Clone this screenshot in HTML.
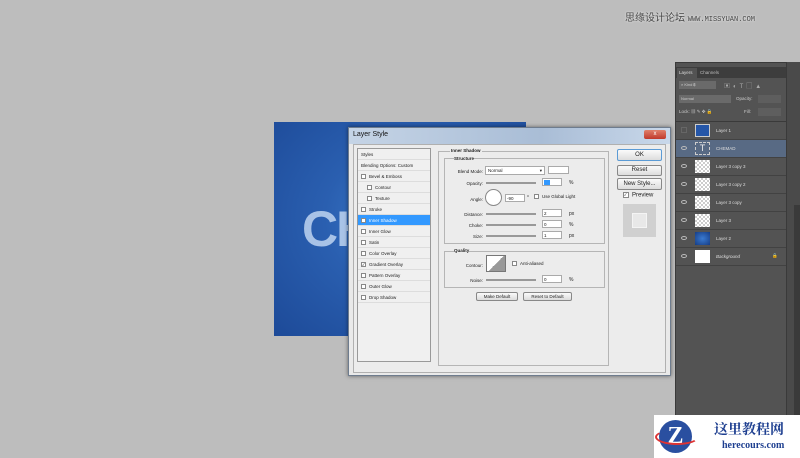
<!DOCTYPE html>
<html><head><meta charset="utf-8"><style>
*{box-sizing:border-box;margin:0;padding:0}
body{width:800px;height:458px;background:#bdbdbd;position:relative;overflow:hidden;font-family:"Liberation Sans","Noto Sans CJK SC",sans-serif;font-size:5px;color:#222}
.a{position:absolute}
.canvas{left:274px;top:122px;width:252px;height:214px;background:radial-gradient(ellipse at 55% 45%,#3f7fd0 0%,#2a5fb0 45%,#1d4a98 100%)}
.dlg{left:348px;top:127px;width:323px;height:249px;background:#e9e9e9;border:1px solid #6e7c8e;box-shadow:0 0 4px rgba(0,0,0,.5)}
.title{left:0;top:0;width:321px;height:16px;background:linear-gradient(90deg,#c5d4e6,#a9bdd6 60%,#c9d8ea);font-size:7px;padding:3px 4px;color:#111}
.close{left:295px;top:2px;width:22px;height:9px;background:linear-gradient(#e0806a,#c0392b);border-radius:2px;color:#fff;font-size:6px;text-align:center;line-height:9px}
.inner{left:4px;top:16px;width:313px;height:229px;background:#ececec;border:1px solid #b0b0b0}
.list{left:8px;top:20px;width:74px;height:214px;background:#f0f0f0;border:1px solid #999}
.list div{height:11px;border-bottom:1px solid #ddd;line-height:11px;padding-left:3px;font-size:4.5px;white-space:nowrap}
.cb{display:inline-block;width:5px;height:5px;border:1px solid #888;background:#fff;vertical-align:middle;margin-right:3px;font-size:4px;line-height:3px}
.grp{border:1px solid #b5b5b5}
.btn{border:1px solid #888;background:linear-gradient(#fafafa,#dcdcdc);border-radius:2px;text-align:center;font-size:6px}
.inp{background:#fff;border:1px solid #aaa}
.sl{height:2px;background:#999}
.lbl{font-size:4.5px;text-align:right}
.panel{left:675px;top:62px;width:112px;height:396px;background:#535353;border:1px solid #3a3a3a}
.row{left:0;width:110px;height:18px;border-bottom:1px solid #424242;color:#ddd;font-size:4.5px}
.row .th{position:absolute;left:19px;top:2px;width:15px;height:13px;background-color:#fff}
.row .nm{position:absolute;left:40px;top:6px}
.row .eye{position:absolute;left:5px;top:6px;width:6px;height:4px;border:1px solid #bbb;border-radius:50%}
.row .chk{background-color:#fff;background-image:linear-gradient(45deg,#ccc 25%,transparent 25%,transparent 75%,#ccc 75%),linear-gradient(45deg,#ccc 25%,transparent 25%,transparent 75%,#ccc 75%);background-size:4px 4px;background-position:0 0,2px 2px}
</style></head><body>
<div class="a" style="left:625px;top:9px;font-size:10px;color:#444;text-shadow:0 0 2px #fff">思缘设计论坛 <span style="font-size:7px;font-family:'Liberation Mono',monospace">WWW.MISSYUAN.COM</span></div>

<div class="a canvas">
<div class="a" style="left:28px;top:78px;font:bold 50px 'Liberation Sans',sans-serif;color:rgba(200,220,245,.8);letter-spacing:-2px">CH</div>
</div>

<div class="a dlg">
<div class="a title">Layer Style</div>
<div class="a close">x</div>
<div class="a inner"></div>
<div class="a list">
<div>Styles</div>
<div>Blending Options: Custom</div>
<div><span class="cb"></span>Bevel &amp; Emboss</div>
<div style="padding-left:9px"><span class="cb"></span>Contour</div>
<div style="padding-left:9px"><span class="cb"></span>Texture</div>
<div><span class="cb"></span>Stroke</div>
<div style="background:#3399ff;color:#fff"><span class="cb">✓</span>Inner Shadow</div>
<div><span class="cb"></span>Inner Glow</div>
<div><span class="cb"></span>Satin</div>
<div><span class="cb"></span>Color Overlay</div>
<div><span class="cb">✓</span>Gradient Overlay</div>
<div><span class="cb"></span>Pattern Overlay</div>
<div><span class="cb"></span>Outer Glow</div>
<div><span class="cb"></span>Drop Shadow</div>
</div>
<div class="a grp" style="left:89px;top:23px;width:171px;height:215px"></div>
<div class="a" style="left:101px;top:20px;font-size:4.5px;font-weight:bold;background:#ececec;padding:0 1px">Inner Shadow</div>
<div class="a grp" style="left:95px;top:30px;width:161px;height:86px"></div>
<div class="a" style="left:105px;top:28px;font-size:4.5px;font-weight:bold;background:#ececec">Structure</div>
<div class="a lbl" style="left:100px;top:41px;width:34px">Blend Mode:</div>
<div class="a inp" style="left:136px;top:38px;width:60px;height:9px;font-size:4.5px;padding:1px 2px">Normal<span style="float:right">▾</span></div>
<div class="a inp" style="left:199px;top:38px;width:21px;height:8px"></div>
<div class="a lbl" style="left:100px;top:53px;width:34px">Opacity:</div>
<div class="a sl" style="left:137px;top:54px;width:50px"></div>
<div class="a inp" style="left:193px;top:50px;width:20px;height:8px"><div style="width:6px;height:5px;background:#3399ff;margin:1px"></div></div>
<div class="a" style="left:220px;top:52px">%</div>
<div class="a lbl" style="left:100px;top:69px;width:34px">Angle:</div>
<div class="a" style="left:136px;top:61px;width:17px;height:17px;border:1px solid #888;border-radius:50%;background:#fff"></div>
<div class="a inp" style="left:156px;top:66px;width:20px;height:8px;font-size:4.5px;padding:1px">-90</div>
<div class="a" style="left:178px;top:67px">°</div>
<div class="a" style="left:185px;top:66px;font-size:4.5px"><span class="cb"></span>Use Global Light</div>
<div class="a lbl" style="left:100px;top:84px;width:34px">Distance:</div>
<div class="a sl" style="left:137px;top:85px;width:50px"></div>
<div class="a inp" style="left:193px;top:81px;width:20px;height:8px;font-size:4.5px;padding:1px">2</div>
<div class="a" style="left:220px;top:83px">px</div>
<div class="a lbl" style="left:100px;top:95px;width:34px">Choke:</div>
<div class="a sl" style="left:137px;top:96px;width:50px"></div>
<div class="a inp" style="left:193px;top:92px;width:20px;height:8px;font-size:4.5px;padding:1px">0</div>
<div class="a" style="left:220px;top:94px">%</div>
<div class="a lbl" style="left:100px;top:106px;width:34px">Size:</div>
<div class="a sl" style="left:137px;top:107px;width:50px"></div>
<div class="a inp" style="left:193px;top:103px;width:20px;height:8px;font-size:4.5px;padding:1px">1</div>
<div class="a" style="left:220px;top:105px">px</div>
<div class="a grp" style="left:95px;top:123px;width:161px;height:37px"></div>
<div class="a" style="left:105px;top:120px;font-size:4.5px;font-weight:bold;background:#ececec">Quality</div>
<div class="a lbl" style="left:100px;top:135px;width:34px">Contour:</div>
<div class="a" style="left:137px;top:127px;width:20px;height:17px;border:1px solid #777;background:linear-gradient(135deg,#fff 50%,#999 50%)"></div>
<div class="a" style="left:163px;top:133px;font-size:4.5px"><span class="cb"></span>Anti-aliased</div>
<div class="a lbl" style="left:100px;top:150px;width:34px">Noise:</div>
<div class="a sl" style="left:137px;top:151px;width:50px"></div>
<div class="a inp" style="left:193px;top:147px;width:20px;height:8px;font-size:4.5px;padding:1px">0</div>
<div class="a" style="left:220px;top:149px">%</div>
<div class="a btn" style="left:127px;top:164px;width:42px;height:9px;font-size:4.5px;line-height:8px">Make Default</div>
<div class="a btn" style="left:174px;top:164px;width:49px;height:9px;font-size:4.5px;line-height:8px">Reset to Default</div>
<div class="a btn" style="left:268px;top:21px;width:45px;height:12px;line-height:10px;border-color:#5b9bd5">OK</div>
<div class="a btn" style="left:268px;top:37px;width:45px;height:11px;line-height:9px">Reset</div>
<div class="a btn" style="left:268px;top:50px;width:45px;height:12px;line-height:10px">New Style...</div>
<div class="a" style="left:274px;top:64px;font-size:6px"><span class="cb" style="width:6px;height:6px">✓</span>Preview</div>
<div class="a" style="left:274px;top:76px;width:33px;height:33px;background:#d0d0d0"><div style="margin:9px;width:15px;height:15px;background:#e8e8e8;border:1px solid #f4f4f4"></div></div>
</div>

<div class="a panel">
<div class="a" style="left:0;top:4px;width:110px;height:11px;background:#3d3d3d"></div>
<div class="a" style="left:1px;top:5px;width:20px;height:10px;background:#535353;color:#ddd;font-size:4.5px;padding:2px 2px">Layers</div>
<div class="a" style="left:24px;top:7px;color:#bbb;font-size:4.5px">Channels</div>
<div class="a" style="left:3px;top:18px;width:37px;height:8px;background:#6a6a6a;color:#ccc;font-size:4px;padding:1px 2px">⌕ Kind ⇕</div>
<div class="a" style="left:48px;top:18px;color:#aaa;font-size:6px;letter-spacing:3px">▣◐T▢▲</div>
<div class="a" style="left:3px;top:32px;width:52px;height:8px;background:#6a6a6a;color:#ccc;font-size:4px;padding:1px 2px">Normal</div>
<div class="a" style="left:60px;top:33px;color:#ccc;font-size:4.5px">Opacity:</div>
<div class="a" style="left:82px;top:32px;width:23px;height:8px;background:#5e5e5e"></div>
<div class="a" style="left:3px;top:46px;color:#ccc;font-size:4.5px">Lock: ▦ ✎ ✥ 🔒</div>
<div class="a" style="left:68px;top:46px;color:#ccc;font-size:4.5px">Fill:</div>
<div class="a" style="left:82px;top:45px;width:23px;height:8px;background:#5e5e5e"></div>
<div class="a" style="left:0;top:58px;width:110px;height:1px;background:#3a3a3a"></div>
<div class="a row" style="top:59px"><span class="th" style="background:#2556a8;border:1px solid #ccc"></span><span class="nm">Layer 1</span><span style="position:absolute;left:5px;top:5px;width:6px;height:6px;border:1px solid #666"></span></div>
<div class="a row" style="top:77px;background:#586a84"><span class="eye"></span><span class="th" style="background:#586a84;border:1px dashed #ccc;color:#eee;font-size:9px;text-align:center">T</span><span class="nm">CHEMAD</span></div>
<div class="a row" style="top:95px"><span class="eye"></span><span class="th chk"></span><span class="nm">Layer 3 copy 3</span></div>
<div class="a row" style="top:113px"><span class="eye"></span><span class="th chk"></span><span class="nm">Layer 3 copy 2</span></div>
<div class="a row" style="top:131px"><span class="eye"></span><span class="th chk"></span><span class="nm">Layer 3 copy</span></div>
<div class="a row" style="top:149px"><span class="eye"></span><span class="th chk"></span><span class="nm">Layer 3</span></div>
<div class="a row" style="top:167px"><span class="eye"></span><span class="th" style="background:radial-gradient(#3a7ad0,#163d85)"></span><span class="nm">Layer 2</span></div>
<div class="a row" style="top:185px"><span class="eye"></span><span class="th"></span><span class="nm" style="font-style:italic">Background</span><span style="position:absolute;left:96px;top:5px;color:#bbb">🔒</span></div>
</div>
<div class="a" style="left:787px;top:62px;width:13px;height:396px;background:#4a4a4a"></div>
<div class="a" style="left:794px;top:205px;width:6px;height:253px;background:#3a3a3a"></div>

<div class="a" style="left:654px;top:415px;width:146px;height:43px;background:#fff">
<div class="a" style="left:5px;top:5px;width:33px;height:33px;border-radius:50%;background:#2a4fa0;color:#fff;font:bold 24px 'Liberation Serif',serif;text-align:center;line-height:33px">Z</div>
<div class="a" style="left:1px;top:14px;width:44px;height:16px;border:2px solid #d33;border-radius:50%;border-color:transparent transparent #d33 #d33"></div>
<div class="a" style="left:60px;top:4px;font:bold 14px 'Noto Serif CJK SC',serif;color:#1e3f90">这里教程网</div>
<div class="a" style="left:68px;top:25px;font:bold 10px 'Liberation Serif',serif;color:#1e3f90">herecours.com</div>
</div>
</body></html>
